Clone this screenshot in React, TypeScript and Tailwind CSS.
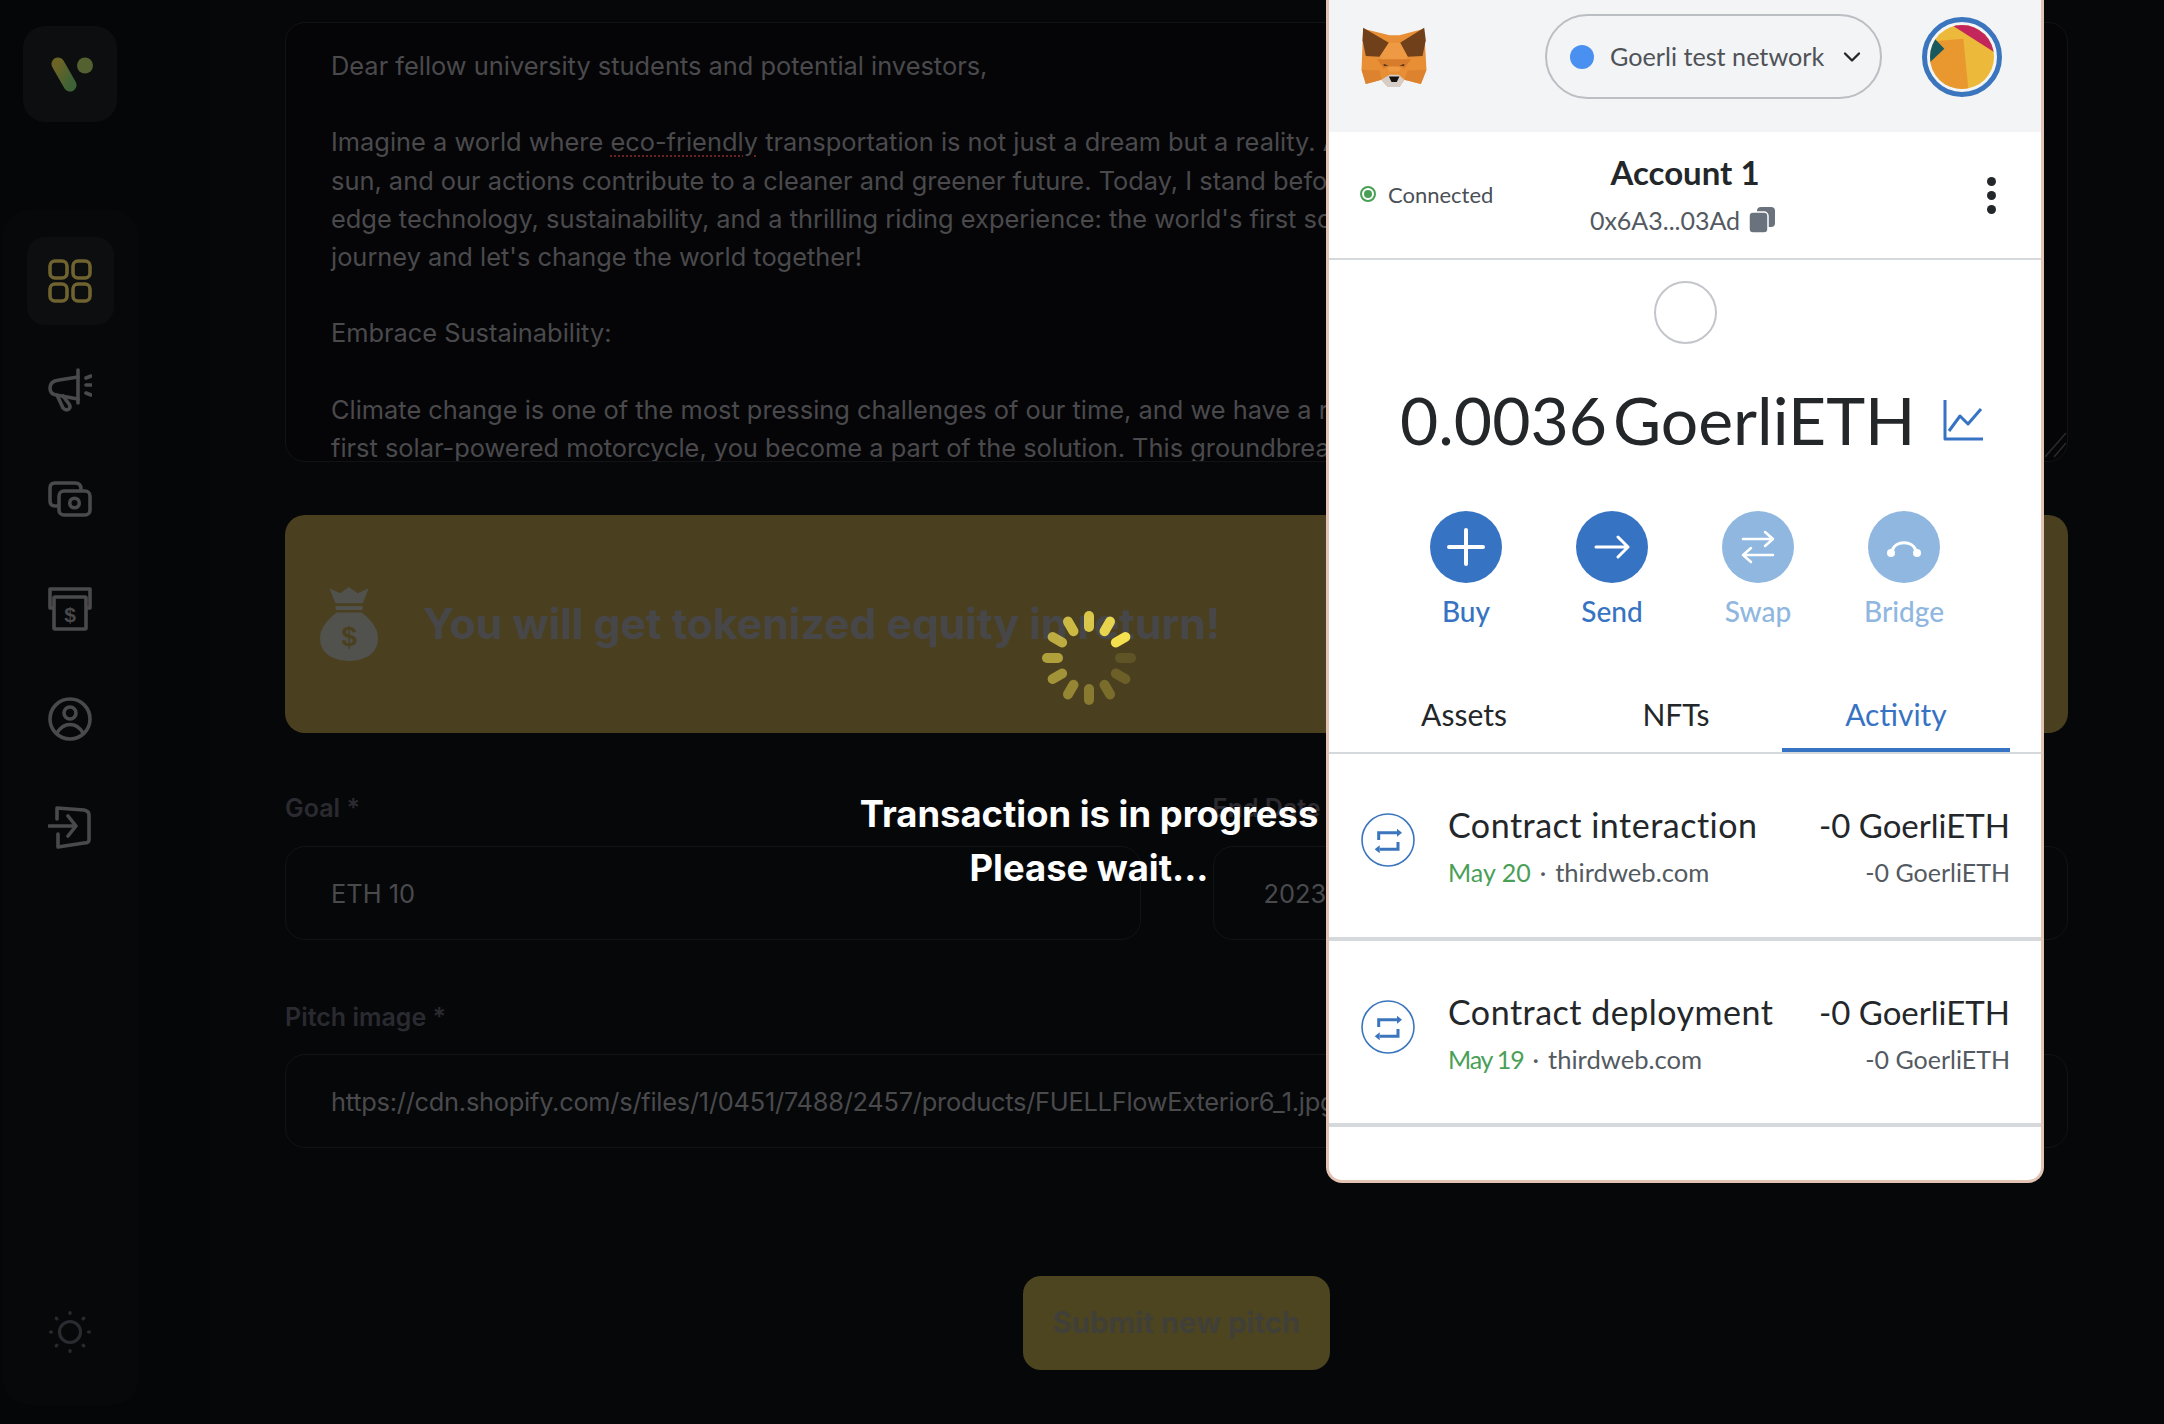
import React from 'react';
import { ChevronDown } from 'lucide-react';

const bodyLines = [
  'Dear fellow university students and potential investors,',
  '',
  null,
  'sun, and our actions contribute to a cleaner and greener future. Today, I stand before',
  "edge technology, sustainability, and a thrilling riding experience: the world's first solar",
  "journey and let's change the world together!",
  '',
  'Embrace Sustainability:',
  '',
  'Climate change is one of the most pressing challenges of our time, and we have a responsibility',
  'first solar-powered motorcycle, you become a part of the solution. This groundbreaking',
];

function GridIcon() {
  return (
    <svg width="44" height="44" viewBox="0 0 44 44" fill="none" stroke="#6f6330" strokeWidth="3.6">
      <rect x="2" y="2" width="17" height="17" rx="5" />
      <rect x="25" y="2" width="17" height="17" rx="5" />
      <rect x="2" y="25" width="17" height="17" rx="5" />
      <rect x="25" y="25" width="17" height="17" rx="5" />
    </svg>
  );
}

function MegaphoneIcon() {
  return (
    <svg width="44" height="44" viewBox="0 0 44 44" fill="none" stroke="#4a4a4c" strokeWidth="3.6" strokeLinecap="round" strokeLinejoin="round">
      <path d="M30 2V35" />
      <path d="M30 9L11 12Q2 13 2 20Q2 26 8 27L30 31" />
      <path d="M9 27L15 40Q18 43 21 41Q23 39 21 36L15 28" />
      <path d="M38 10l5-2M38 17h5M38 25l5 2" />
    </svg>
  );
}

function CashIcon() {
  return (
    <svg width="44" height="44" viewBox="0 0 44 44" fill="none" stroke="#4a4a4c" strokeWidth="3.6" strokeLinecap="round" strokeLinejoin="round">
      <path d="M9 28H7Q2 28 2 23V10Q2 5 7 5H27Q33 5 33 11" />
      <rect x="11" y="13" width="31" height="24" rx="5" />
      <circle cx="26.5" cy="25" r="4.8" />
    </svg>
  );
}

function AtmIcon() {
  return (
    <svg width="44" height="44" viewBox="0 0 44 44" fill="none" stroke="#4a4a4c" strokeWidth="3.6" strokeLinejoin="round">
      <path d="M6 21H2V2H42V21H38" />
      <rect x="6" y="10" width="32" height="32" rx="1" />
      <text x="22" y="35" textAnchor="middle" fontFamily="Liberation Sans, sans-serif" fontWeight="700" fontSize="21" fill="#4a4a4c" stroke="none">$</text>
    </svg>
  );
}

function UserIcon() {
  return (
    <svg width="44" height="44" viewBox="0 0 44 44" fill="none" stroke="#4a4a4c" strokeWidth="3.6" strokeLinecap="round">
      <circle cx="22" cy="22" r="20" />
      <circle cx="22" cy="16" r="6" />
      <path d="M9 36Q14 27.500 22 27.500Q30 27.500 35 36" />
    </svg>
  );
}

function LoginIcon() {
  return (
    <svg width="44" height="44" viewBox="0 0 44 44" fill="none" stroke="#4a4a4c" strokeWidth="3.6" strokeLinecap="round" strokeLinejoin="round">
      <path d="M9 13V2L36 4Q41 5 41 9V34Q41 37 36 37L10 41V28" />
      <path d="M1 20H27M20 10L28 20L20 30" />
    </svg>
  );
}

function SunIcon() {
  const dots = [0, 45, 90, 135, 180, 225, 270, 315];
  return (
    <svg width="44" height="44" viewBox="0 0 44 44" fill="none" stroke="#2a2a30" strokeWidth="3.2" strokeLinecap="round">
      <circle cx="22" cy="22" r="10.500" />
      {dots.map((d) => (
        <line key={d} x1="22" y1="2.500" x2="22" y2="3.500" transform={`rotate(${d} 22 22)`} />
      ))}
    </svg>
  );
}

function Logo() {
  return (
    <svg width="42" height="35" viewBox="0 0 42 35" fill="none" className="ml-[4px]">
      <defs>
        <linearGradient id="pill" x1="0" y1="0" x2="1" y2="1">
          <stop offset="0" stopColor="#6c6425" />
          <stop offset="1" stopColor="#3d6236" />
        </linearGradient>
      </defs>
      <line x1="7" y1="7" x2="19" y2="28" stroke="url(#pill)" strokeWidth="13" strokeLinecap="round" />
      <ellipse cx="34" cy="8.500" rx="8" ry="8" fill="#53602f" />
    </svg>
  );
}

function MoneyBag() {
  return (
    <svg width="58" height="74" viewBox="62 52 173 220">
      <path d="M90 55L122 70L148 52L175 70L207 55L190 100H108Z" fill="#51514d" />
      <rect x="108" y="108" width="82" height="12" rx="4" fill="#51514d" />
      <path d="M112 128H186C215 150 235 175 235 205C235 250 195 272 149 272C103 272 62 250 62 205C62 175 83 150 112 128Z" fill="#51514d" />
      <text x="149" y="228" textAnchor="middle" fontFamily="Liberation Sans, sans-serif" fontWeight="700" fontSize="82" fill="#4a401f">$</text>
    </svg>
  );
}

function Spinner() {
  const angles = [60, 30, 0, -30, -60, -90, -120, -150, 180, 150, 120, 90];
  return (
    <svg width="96" height="96" viewBox="-48 -48 96 96">
      {angles.map((a, i) => (
        <line key={a} x1="0" y1="-42" x2="0" y2="-31" stroke="#f5e050" strokeWidth="10" strokeLinecap="round" opacity={1 - i * 0.08} transform={`rotate(${a})`} />
      ))}
    </svg>
  );
}

function Fox() {
  return (
    <svg width="66" height="60" viewBox="65 80 197 182">
      <path d="M70 85L150 105H180L255 85L262 210L245 253L195 240L180 262H145L125 240L78 253L65 210Z" fill="#e88e35" />
      <path d="M70 82L148 128L120 170L78 168L68 120Z" fill="#70401a" />
      <path d="M255 82L182 128L205 170L250 168L260 120Z" fill="#70401a" />
      <path d="M148 128L182 128L205 170L178 215H150L120 170Z" fill="#ee9a45" />
      <path d="M112 178H215L195 205L178 200H150L132 205Z" fill="#d77c2a" />
      <path d="M65 210L120 212L125 240L78 253Z" fill="#dd8330" />
      <path d="M262 210L205 212L195 240L245 253Z" fill="#dd8330" />
      <path d="M125 240L150 225H178L195 240L180 262H145Z" fill="#d5cdc6" />
      <path d="M148 230H180L172 247H156Z" fill="#17120f" />
      <path d="M132 192L147 197L133 198Z" fill="#3f2a18" />
      <path d="M195 192L180 197L194 198Z" fill="#3f2a18" />
    </svg>
  );
}

function Avatar() {
  return (
    <div className="mt-[3px] h-[80px] w-[80px] rounded-full border-[5px] border-[#3a75bd] p-[3px]">
      <svg width="64" height="64" viewBox="90 74 192 192">
        <defs>
          <clipPath id="avatarClip">
            <circle cx="186" cy="170" r="96" />
          </clipPath>
        </defs>
        <g clipPath="url(#avatarClip)">
          <rect x="90" y="74" width="192" height="192" fill="#ecb93a" />
          <path d="M155 74L282 155V74Z" fill="#c2265a" />
          <path d="M110 122L190 115L205 266H90V185Z" fill="#e8982f" />
          <path d="M105 116L133 145L90 186V120Z" fill="#17595f" />
        </g>
      </svg>
    </div>
  );
}

function TxIcon() {
  return (
    <svg width="54" height="54" viewBox="0 0 54 54" fill="none" className="mt-[9px] shrink-0">
      <circle cx="27" cy="27" r="26" stroke="#3a75bd" strokeWidth="1.600" />
      <path d="M17.700 27V19.700H36M37 29V36.300H18.700" stroke="#3a75bd" strokeWidth="3" />
      <path d="M36 15.700L41 19.700L36 23.700ZM18.700 32.300L13.700 36.300L18.700 40.300Z" fill="#3a75bd" />
    </svg>
  );
}

function ActionButton({ label, dim, children }: { label: string; dim?: boolean; children: React.ReactNode }) {
  return (
    <div className="flex w-[146px] flex-col items-center">
      <div className={`flex h-[72px] w-[72px] items-center justify-center rounded-full ${dim ? 'bg-[#8fb7e0]' : 'bg-[#3773c3]'}`}>{children}</div>
      <div className={`mt-[10px] text-[28px] leading-[36px] font-medium ${dim ? 'text-[#8fb7e0]' : 'text-[#3773c3]'}`}>{label}</div>
    </div>
  );
}

function TxRow({ title, date, dateClass, site }: { title: string; date: string; dateClass?: string; site: string }) {
  return (
    <div className="flex h-[186.5px] gap-[33px] border-b-4 border-[#d6d9dc] pt-[50px] pr-[31px] pl-[32px]">
      <TxIcon />
      <div className="flex-1">
        <div className="flex justify-between leading-[42px] text-[#24272a]">
          <span className="text-[34px] tracking-[0.5px]">{title}</span>
          <span className="text-[33px]">-0 GoerliETH</span>
        </div>
        <div className="mt-[10px] flex justify-between text-[25px] leading-[32px] text-[#535a61]">
          <span>
            <span className={`text-[#4a9f57] ${dateClass ?? ''}`}>{date}</span>
            <span className="mx-[9px]">·</span>
            <span className="text-[25.6px]">{site}</span>
          </span>
          <span>-0 GoerliETH</span>
        </div>
      </div>
    </div>
  );
}

function WalletPopup() {
  return (
    <div className="absolute top-0 left-[1326px] flex h-[1183px] w-[718px] flex-col overflow-hidden rounded-b-[16px] border-x-[3px] border-b-[3px] border-[#e3c3b3] bg-white font-['Lato',sans-serif]">
      <div className="flex h-[132px] shrink-0 items-start bg-[#f2f4f6] pt-[14px] pl-[32px]">
        <div className="mt-[13px]">
          <Fox />
        </div>
        <div className="ml-[118px] flex h-[85px] w-[337px] items-center rounded-full border-2 border-[#bbbec2] pl-[23px]">
          <div className="h-[24px] w-[24px] rounded-full bg-[#4a90f0]" />
          <span className="ml-[16px] text-[25.2px] text-[#4f5257]">Goerli test network</span>
          <ChevronDown size={28} strokeWidth={2} className="ml-[14px] text-[#24272a]" />
        </div>
        <div className="ml-[40px]">
          <Avatar />
        </div>
      </div>

      <div className="grid h-[128px] shrink-0 grid-cols-3 items-center border-b-2 border-[#d6d9dc]">
        <div className="flex items-center gap-[12px] pb-[2px] pl-[31px]">
          <div className="flex h-[16px] w-[16px] items-center justify-center rounded-full border-2 border-[#4a9f57]">
            <div className="h-[8px] w-[8px] rounded-full bg-[#4a9f57]" />
          </div>
          <span className="text-[22px] text-[#4b4f56]">Connected</span>
        </div>
        <div className="flex flex-col items-center gap-[12px] pb-[2px] whitespace-nowrap">
          <div className="text-[33px] leading-[40px] font-bold text-[#24272a]">Account 1</div>
          <div className="flex items-center gap-[9px] pr-[5px] text-[25px] leading-[32px] text-[#535a61]">
            0x6A3...03Ad
            <svg width="26" height="26" viewBox="0 0 26 26" fill="#6a737d">
              <rect x="8" y="0" width="18" height="20" rx="4" />
              <rect x="0" y="5" width="19" height="21" rx="4" stroke="#fff" strokeWidth="1.500" />
            </svg>
          </div>
        </div>
        <div className="flex flex-col items-end gap-[5px] pr-[45px]">
          <div className="h-[9px] w-[9px] rounded-full bg-[#24272a]" />
          <div className="h-[9px] w-[9px] rounded-full bg-[#24272a]" />
          <div className="h-[9px] w-[9px] rounded-full bg-[#24272a]" />
        </div>
      </div>

      <div className="mx-auto mt-[21px] h-[63px] w-[63px] rounded-full border-2 border-[#c4c6cc]" />

      <div className="mt-[36px] flex h-[80px] items-center pl-[71px] text-[66px] leading-[80px] text-[#24272a]">
        <span>0.0036</span>
        <span className="ml-[6px]">GoerliETH</span>
        <svg width="40" height="42" viewBox="0 0 40 42" fill="none" stroke="#3773c3" strokeWidth="3" strokeLinejoin="round" className="ml-[27px]">
          <path d="M2 1V40H40" />
          <path d="M6 32L17 17L25 25L38 10" />
        </svg>
      </div>

      <div className="mt-[51px] flex pl-[64px]">
        <ActionButton label="Buy">
          <svg width="40" height="40" viewBox="0 0 40 40" stroke="#fff" strokeWidth="4" strokeLinecap="round">
            <path d="M20 3V37M3 20H37" />
          </svg>
        </ActionButton>
        <ActionButton label="Send">
          <svg width="36" height="26" viewBox="0 0 36 26" fill="none" stroke="#fff" strokeWidth="3" strokeLinecap="round" strokeLinejoin="round">
            <path d="M2 13H34M24 3L34 13L24 23" />
          </svg>
        </ActionButton>
        <ActionButton label="Swap" dim>
          <svg width="36" height="34" viewBox="0 0 36 34" fill="none" stroke="#fff" strokeWidth="2.500" strokeLinecap="round" strokeLinejoin="round">
            <path d="M3 9H33M25 2L33 9L25 16M33 25H3M11 18L3 25L11 32" />
          </svg>
        </ActionButton>
        <ActionButton label="Bridge" dim>
          <svg width="36" height="24" viewBox="0 0 36 24" fill="none">
            <path d="M6 16C9 5 27 5 30 16" stroke="#fff" strokeWidth="3" />
            <circle cx="5" cy="18" r="4" fill="#fff" />
            <circle cx="31" cy="18" r="4" fill="#fff" />
          </svg>
        </ActionButton>
      </div>

      <div className="mt-[46px] flex h-[79px] shrink-0 border-b-2 border-[#d6d9dc] pl-[29px] text-[30px]">
        <div className="flex h-[77px] w-[212px] items-center justify-center border-b-4 border-transparent pt-[5px] text-[#24272a]">Assets</div>
        <div className="flex h-[77px] w-[212px] items-center justify-center border-b-4 border-transparent pt-[5px] text-[#24272a]">NFTs</div>
        <div className="flex h-[77px] w-[228px] items-center justify-center border-b-4 border-[#3773c3] pt-[5px] text-[#3773c3]">Activity</div>
      </div>

      <TxRow title="Contract interaction" date="May 20" site="thirdweb.com" />
      <TxRow title="Contract deployment" date="May 19" dateClass="tracking-[-1.2px]" site="thirdweb.com" />
    </div>
  );
}

export default function App() {
  return (
    <div className="relative flex h-[1424px] w-full overflow-hidden bg-[#060709] font-['Inter',sans-serif]">
      {/* サイドバー */}
      <div className="flex w-[210px] shrink-0 flex-col bg-[#050608]">
        <div className="mt-[26px] ml-[23px] flex h-[96px] w-[94px] items-center justify-center rounded-[22px] bg-[#0c0e10]">
          <Logo />
        </div>
        <div className="mt-[88px] ml-[2px] flex h-[1195px] w-[137px] flex-col items-center justify-between rounded-[28px] bg-[#07080a] pt-[27px] pb-[29px]">
          <div className="flex flex-col items-center gap-[21.4px]">
            <div className="flex h-[88px] w-[87px] items-center justify-center rounded-[18px] bg-[#0c0e10] pr-[2px]">
              <GridIcon />
            </div>
            <div className="flex h-[88px] w-[87px] items-center justify-center pr-[2px]"><MegaphoneIcon /></div>
            <div className="flex h-[88px] w-[87px] items-center justify-center pr-[2px]"><CashIcon /></div>
            <div className="flex h-[88px] w-[87px] items-center justify-center pr-[2px]"><AtmIcon /></div>
            <div className="flex h-[88px] w-[87px] items-center justify-center pr-[2px]"><UserIcon /></div>
            <div className="flex h-[88px] w-[87px] items-center justify-center pr-[2px]"><LoginIcon /></div>
          </div>
          <div className="flex h-[88px] w-[87px] items-center justify-center pr-[2px]"><SunIcon /></div>
        </div>
      </div>

      {/* フォーム */}
      <div className="w-[1783px] shrink-0 pt-[22px] pl-[75px] box-content">
        <div className="w-[1783px]">
          <div className="relative h-[440px] overflow-hidden rounded-[20px] border border-[#121316] bg-[#050507] pt-[24px] pl-[45px] text-[25.4px] leading-[38.2px] whitespace-pre text-[#4a4a4d]">
            {bodyLines.map((line, i) =>
              line === null ? (
                <div key={i}>
                  Imagine a world where <span className="underline decoration-[#6a2222] decoration-dotted decoration-2 underline-offset-4">eco-friendly</span> transportation is not just a dream but a reality. A
                </div>
              ) : (
                <div key={i} className="h-[38.2px]">{line}</div>
              ),
            )}
            <svg width="22" height="26" viewBox="0 0 22 26" stroke="#2a2a2c" strokeWidth="1.500" className="absolute right-0 bottom-[3px]">
              <path d="M0 25L21 1M9 25L21 11M17 25L21 20" />
            </svg>
          </div>

          <div className="mt-[53px] flex h-[218px] items-center gap-[45px] rounded-[20px] bg-[#4a401f] pl-[35px]">
            <MoneyBag />
            <span className="text-[42.7px] font-bold text-[#47474a]">You will get tokenized equity in return!</span>
          </div>

          <div className="mt-[57px] grid grid-cols-2 gap-x-[72px]">
            <div>
              <div className="mb-[20px] text-[25px] leading-[36px] font-semibold text-[#2a2a30]">Goal *</div>
              <div className="flex h-[94px] items-center rounded-[20px] border border-[#121316] pt-[2px] pl-[45px] text-[25.4px] text-[#4a4a4d]">ETH 10</div>
            </div>
            <div>
              <div className="mb-[20px] text-[25px] leading-[36px] font-semibold text-[#2a2a30]">End Date *</div>
              <div className="flex h-[94px] items-center rounded-[20px] border border-[#121316] pt-[2px] pl-[50px] text-[25.4px] text-[#4a4a4d]">2023-06-30</div>
            </div>
          </div>

          <div className="mt-[59px]">
            <div className="mb-[19px] text-[25px] leading-[36px] font-semibold text-[#2a2a30]">Pitch image *</div>
            <div className="flex h-[94px] items-center overflow-hidden rounded-[20px] border border-[#121316] pt-[2px] pl-[45px] text-[25.4px] tracking-[-0.25px] whitespace-nowrap text-[#4a4a4d]">
              https://cdn.shopify.com/s/files/1/0451/7488/2457/products/FUELLFlowExterior6_1.jpg
            </div>
          </div>

          <div className="mt-[128px] flex justify-center">
            <div className="flex h-[94px] w-[307px] items-center justify-center rounded-[18px] bg-[#4d4520] text-[29.3px] font-bold text-[#403f38]">Submit new pitch</div>
          </div>
        </div>
      </div>

      {/* 処理中オーバーレイ */}
      <div className="absolute top-[610px] left-[789px] flex w-[600px] flex-col items-center text-center">
        <Spinner />
        <div className="mt-[81px] text-[36.4px] leading-[54px] font-bold whitespace-nowrap text-white">
          Transaction is in progress
          <br />
          Please wait...
        </div>
      </div>

      <WalletPopup />
    </div>
  );
}
